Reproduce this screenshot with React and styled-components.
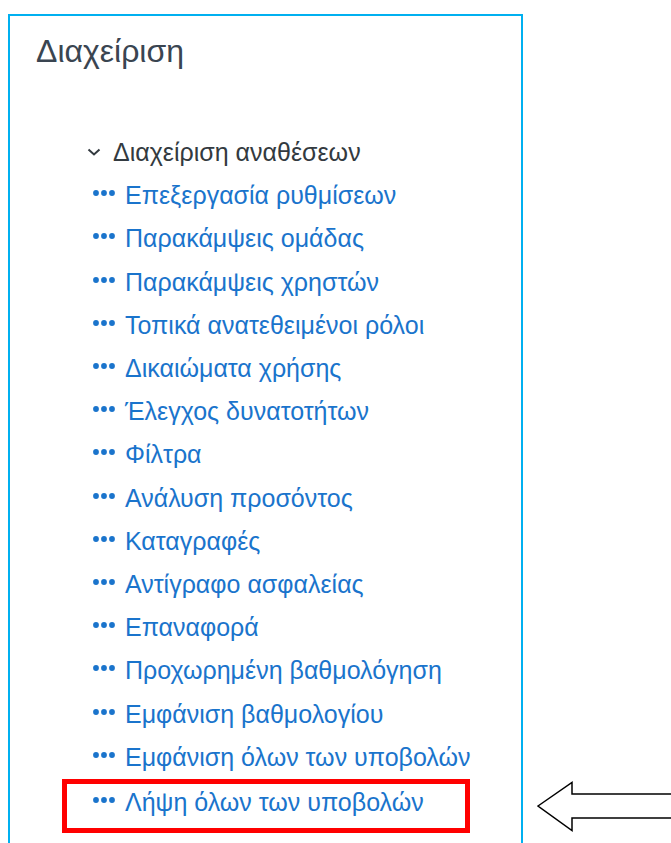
import React from "react";
import styled, { createGlobalStyle } from "styled-components";

const GlobalStyle = createGlobalStyle`
  html, body {
    margin: 0;
    padding: 0;
    background: #ffffff;
  }
  body {
    font-family: "Liberation Sans", Arial, sans-serif;
  }
`;

const Page = styled.div`
  display: flex;
  align-items: stretch;
  width: 671px;
  height: 843px;
  overflow: hidden;
  background: #ffffff;
`;

const Panel = styled.section`
  box-sizing: border-box;
  flex: none;
  width: 515px;
  margin: 14px 0 0 8px;
  border: 2px solid #00b0f0;
  border-bottom: none;
  padding: 16px 0 0 26px;
  background: #ffffff;
`;

const Title = styled.h2`
  margin: 0;
  font-family: "Liberation Sans", Arial, sans-serif;
  font-weight: 400;
  font-size: 32px;
  line-height: 38px;
  color: #3a4551;
`;

const Tree = styled.ul`
  list-style: none;
  margin: 61px 0 0 0;
  padding: 0 0 0 51px;
`;

const Row = styled.li`
  display: flex;
  align-items: center;
  height: 43.2px;
  font-size: 25px;
  line-height: 43px;
  color: ${(p) => (p.$branch ? "#333a40" : "#1a74cc")};
  white-space: nowrap;
`;

const Highlight = styled.li`
  box-sizing: border-box;
  display: flex;
  align-items: center;
  width: 408px;
  height: 54px;
  margin-left: -25px;
  padding-left: 20px;
  padding-bottom: 6px;
  border: 5px solid #ff0000;
  font-size: 25px;
  color: #1a74cc;
  white-space: nowrap;
`;

const Chevron = styled.svg`
  flex: none;
  width: 14px;
  height: 10px;
  margin: -2px 12px 0 0;
`;

const Dots = styled.svg`
  flex: none;
  width: 22px;
  height: 6px;
  margin: -5px 10px 0 6px;
`;

const ArrowSlot = styled.div`
  flex: none;
  align-self: flex-end;
  margin: 0 0 10px 14px;
  line-height: 0;
`;

const items = [
  "Επεξεργασία ρυθμίσεων",
  "Παρακάμψεις ομάδας",
  "Παρακάμψεις χρηστών",
  "Τοπικά ανατεθειμένοι ρόλοι",
  "Δικαιώματα χρήσης",
  "Έλεγχος δυνατοτήτων",
  "Φίλτρα",
  "Ανάλυση προσόντος",
  "Καταγραφές",
  "Αντίγραφο ασφαλείας",
  "Επαναφορά",
  "Προχωρημένη βαθμολόγηση",
  "Εμφάνιση βαθμολογίου",
  "Εμφάνιση όλων των υποβολών",
];

const DotIcon = () => (
  <Dots viewBox="0 0 22 6" aria-hidden="true">
    <circle cx="3" cy="3" r="2.9" fill="#1a74cc" />
    <circle cx="11" cy="3" r="2.9" fill="#1a74cc" />
    <circle cx="19" cy="3" r="2.9" fill="#1a74cc" />
  </Dots>
);

export default function App() {
  return (
    <>
      <GlobalStyle />
      <Page>
        <Panel>
          <Title>Διαχείριση</Title>
          <Tree>
            <Row $branch>
              <Chevron viewBox="0 0 14 10" aria-hidden="true">
                <path d="M1.5 2.5 L7 7.5 L12.5 2.5" fill="none" stroke="#333a40" strokeWidth="2" />
              </Chevron>
              Διαχείριση αναθέσεων
            </Row>
            {items.map((label) => (
              <Row key={label}>
                <DotIcon />
                {label}
              </Row>
            ))}
            <Highlight>
              <DotIcon />
              Λήψη όλων των υποβολών
            </Highlight>
          </Tree>
        </Panel>
        <ArrowSlot>
          <svg width="134" height="52" viewBox="0 0 134 52" aria-hidden="true">
            <path
              d="M1 25 L35 1.5 L35 13 L140 13 L140 37 L35 37 L35 49.5 Z"
              fill="#ffffff"
              stroke="#000000"
              strokeWidth="1.5"
              strokeLinejoin="miter"
            />
          </svg>
        </ArrowSlot>
      </Page>
    </>
  );
}
